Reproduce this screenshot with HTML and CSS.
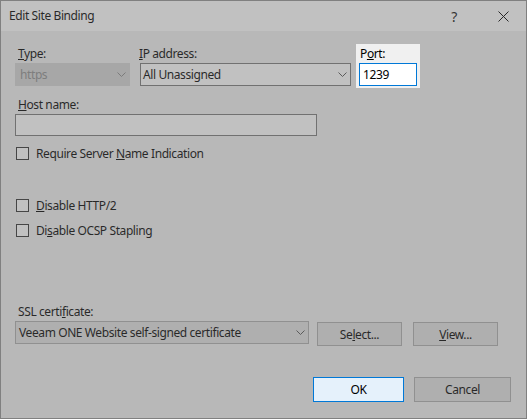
FILE: index.html
```html
<!DOCTYPE html>
<html>
<head>
<meta charset="utf-8">
<title>Edit Site Binding</title>
<link rel="stylesheet" href="styles.css">
</head>
<body>
<div class="dialog">
  <div class="titlebar">
    <span class="title">Edit Site Binding</span>
    <span class="tb-btn help">?</span>
    <span class="tb-btn close"><svg width="11" height="11" viewBox="0 0 11 11"><path d="M0.5 0.5L10.5 10.5M10.5 0.5L0.5 10.5" stroke="#000" stroke-width="1"/></svg></span>
  </div>
  <div class="content">
    <div class="row1">
      <div class="group type-group">
        <label class="lbl lbl-type"><u>T</u>ype:</label>
        <div class="combo disabled"><span>https</span><svg class="chev" width="9" height="5" viewBox="0 0 9 5"><path d="M0.5 0.5L4.5 4.5L8.5 0.5" fill="none" stroke="#8a8a8a"/></svg></div>
      </div>
      <div class="group ip-group">
        <label class="lbl lbl-ip"><u>I</u>P address:</label>
        <div class="combo edit"><span>All Unassigned</span><svg class="chev" width="9" height="5" viewBox="0 0 9 5"><path d="M0.5 0.5L4.5 4.5L8.5 0.5" fill="none" stroke="#555"/></svg></div>
      </div>
      <div class="group port-group">
        <label class="lbl lbl-port">P<u>o</u>rt:</label>
        <div class="textbox focused">1239</div>
      </div>
    </div>

    <label class="lbl lbl-host"><u>H</u>ost name:</label>
    <div class="textbox host"></div>

    <div class="check first"><span class="box"></span><span>Require Server <u>N</u>ame Indication</span></div>
    <div class="check second"><span class="box"></span><span><u>D</u>isable HTTP/2</span></div>
    <div class="check third"><span class="box"></span><span>Di<u>s</u>able OCSP Stapling</span></div>

    <label class="lbl lbl-ssl">SSL certi<u>f</u>icate:</label>
    <div class="ssl-row">
      <div class="combo ssl"><span>Veeam ONE Website self-signed certificate</span><svg class="chev" width="9" height="5" viewBox="0 0 9 5"><path d="M0.5 0.5L4.5 4.5L8.5 0.5" fill="none" stroke="#555"/></svg></div>
      <button class="btn select">Se<u>l</u>ect...</button>
      <button class="btn view"><u>V</u>iew...</button>
    </div>

    <div class="footer">
      <button class="btn ok">OK</button>
      <button class="btn cancel">Cancel</button>
    </div>
  </div>
  <div class="dim"></div>
</div>
</body>
</html>
```

FILE: styles.css
```css
* { box-sizing: border-box; }
html, body { margin: 0; padding: 0; }
body {
  width: 527px;
  height: 419px;
  overflow: hidden;
  font-family: "Segoe UI", "Noto Sans", sans-serif;
  font-size: 12px;
  letter-spacing: -0.4px;
  color: #000;
}
u { text-decoration: underline; text-underline-offset: 1px; }

.dialog {
  position: relative;
  width: 527px;
  height: 419px;
  border: 1px solid #939393;
  background: #f0f0f0;
  display: flex;
  flex-direction: column;
}

.titlebar {
  height: 30px;
  background: #ffffff;
  display: flex;
  align-items: center;
  padding-left: 8px;
  flex-shrink: 0;
}
.title { flex: 1; font-size: 12px; line-height: 16px; }
.tb-btn {
  width: 46px;
  height: 30px;
  display: flex;
  align-items: center;
  justify-content: center;
}
.help { font-size: 14px; padding-right: 6px; color: #111; }
.close svg { display: block; }

.content {
  flex: 1;
  padding: 13px 15px 0 14px;
  display: flex;
  flex-direction: column;
  align-items: flex-start;
}

.row1 { display: flex; align-items: flex-start; }
.group { display: flex; flex-direction: column; padding-top: 3px; }
.type-group { width: 115px; }
.ip-group { width: 211px; margin-left: 10px; }
.port-group {
  position: relative;
  z-index: 2;
  width: 64px;
  margin-left: 5px;
  padding: 3px 3px 2px 3px;
  background: #f0f0f0;
}

.lbl {
  display: block;
  height: 14px;
  line-height: 14px;
  margin-bottom: 2px;
  white-space: nowrap;
}
.lbl-type { margin-left: 3px; }
.lbl-ip { margin-left: -1px; }
.lbl-port { margin-left: 1px; }
.lbl-host { margin-left: 3px; margin-top: 10px; }
.lbl-ssl { margin-left: 3px; margin-top: 67px; }

.combo {
  position: relative;
  height: 23px;
  border: 1px solid #adadad;
  background: #e1e1e1;
  display: flex;
  align-items: center;
  padding-left: 3px;
  white-space: nowrap;
}
.combo span { flex: 1; }
.combo .chev { margin-right: 3px; flex-shrink: 0; }
.combo.edit { background: #ffffff; border-color: #7a7a7a; padding-left: 2px; }
.combo.disabled { background: #d4d4d4; border-color: #d4d4d4; color: #8f8f8f; padding-left: 4px; }
.ssl { width: 294px; }

.textbox {
  height: 23px;
  border: 1px solid #7a7a7a;
  background: #fff;
  display: flex;
  align-items: center;
  padding-left: 3px;
}
.textbox.focused { width: 58px; border-color: #0078d7; }
.textbox.host { width: 302px; height: 22px; }

.check {
  display: flex;
  align-items: center;
  height: 15px;
  line-height: 15px;
  white-space: nowrap;
}
.check .box {
  width: 13px;
  height: 13px;
  border: 1px solid #333;
  background: #fff;
  margin-left: 1px;
  margin-right: 7px;
}
.check.first { margin-top: 10px; }
.check.second { margin-top: 37px; }
.check.third { margin-top: 10px; }

.ssl-row { display: flex; align-items: flex-start; }
.btn {
  font-family: inherit;
  font-size: 12px;
  letter-spacing: inherit;
  color: #000;
  height: 24px;
  border: 1px solid #adadad;
  background: #e1e1e1;
  padding: 0;
  margin: 0;
}
.select { width: 85px; margin-left: 8px; margin-top: 1px; }
.view { width: 85px; margin-left: 11px; margin-top: 1px; }

.footer {
  align-self: stretch;
  display: flex;
  justify-content: flex-end;
  margin-top: 31px;
}
.ok {
  position: relative;
  z-index: 2;
  width: 91px;
  height: 25px;
  border-color: #0078d7;
  background: #e5f1fb;
}
.cancel { width: 97px; height: 25px; margin-left: 10px; }

.dim {
  position: absolute;
  left: -1px;
  top: -1px;
  right: -1px;
  bottom: -1px;
  background: rgba(100, 100, 100, 0.4);
  z-index: 1;
}
```
